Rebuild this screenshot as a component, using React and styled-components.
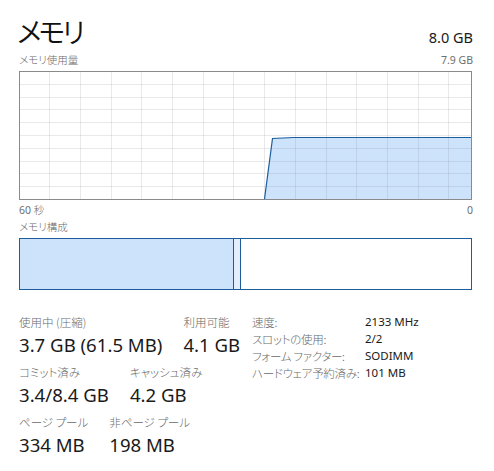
import styled, { createGlobalStyle } from "styled-components";

const GlobalStyle = createGlobalStyle`
  body {
    margin: 0;
    background: #ffffff;
    font-family: "Noto Sans", "Noto Sans CJK JP", sans-serif;
    color: #1a1a1a;
  }
`;

const Page = styled.div`
  width: 494px;
  height: 471px;
  padding: 12px 22px 0 19px;
  box-sizing: border-box;
  overflow: hidden;
`;

const HeadRow = styled.div`
  display: flex;
  justify-content: space-between;
  align-items: baseline;
`;

const Title = styled.div`
  font-family: "Noto Sans CJK JP", sans-serif;
  font-feature-settings: "palt";
  font-size: 28px;
  font-weight: 350;
  letter-spacing: -3px;
  line-height: 38px;
  color: #111;
  margin-left: -2px;
`;

const Total = styled.div`
  font-size: 14.5px;
  margin-right: -1px;
`;

const CaptionRow = styled.div`
  display: flex;
  justify-content: space-between;
  font-size: 10.5px;
  line-height: 14px;
  color: #6d6d6d;
  margin-top: ${(p) => p.$mt || 0}px;
  margin-right: -1px;
`;

const Jp = styled.span`
  font-family: "Noto Sans CJK JP", sans-serif;
  font-feature-settings: "palt";
  font-weight: 300;
  color: #6a6a6a;
  white-space: nowrap;
`;

const Graph = styled.svg`
  display: block;
  margin-top: 4px;
`;

const CompositionBar = styled.div`
  display: flex;
  height: 52px;
  width: 453px;
  margin-top: 4px;
  box-sizing: border-box;
  border: 1px solid #1d5c9b;
`;

const Segment = styled.div`
  width: ${(p) => p.$w}px;
  flex: ${(p) => (p.$w ? "none" : "1")};
  background: ${(p) => p.$bg};
  border-right: ${(p) => (p.$last ? "none" : "1px solid #1d5c9b")};
`;

const Stats = styled.div`
  display: flex;
  margin-top: 24px;
`;

const LeftStats = styled.div`
  width: 233px;
  display: flex;
  flex-direction: column;
  gap: 5px;
`;

const StatRow = styled.div`
  display: flex;
  gap: 21px;
`;

const Stat = styled.div`
  display: flex;
  flex-direction: column;
`;

const StatLabel = styled(Jp)`
  display: block;
  font-size: 11.5px;
  line-height: 16px;
`;

const StatValue = styled.div`
  font-size: 18.6px;
  line-height: 29px;
  color: #1a1a1a;
  white-space: nowrap;
`;

const InfoTable = styled.div`
  display: grid;
  grid-template-columns: 113px auto;
  grid-auto-rows: 17px;
  align-items: center;
  margin-top: -1px;
  font-size: 11.5px;
`;

const InfoKey = styled(Jp)`
  display: block;
  letter-spacing: -0.3px;
`;

const InfoVal = styled.div`
  color: #1a1a1a;
  white-space: nowrap;
`;

const W = 453;
const H = 129;

function UsageGraph() {
  const vLines = [];
  for (let i = 1; i <= 14; i++) vLines.push(Math.round(0.5 + i * 30.7) - 0.5);
  const hLines = [];
  for (let i = 1; i <= 9; i++) hLines.push(Math.round(i * 12.8) + 0.5);
  const pts = "245.5,128 253.5,67.5 274.5,66.5 452,66.5";
  return (
    <Graph width={W} height={H} viewBox={`0 0 ${W} ${H}`}>
      <rect x="0" y="0" width={W} height={H} fill="#fff" />
      <polygon points={`${pts} 452,128`} fill="#cce3fb" />
      {vLines.map((x) => (
        <line key={"v" + x} x1={x} y1="0" x2={x} y2={H} stroke="rgba(120,120,130,0.16)" />
      ))}
      {hLines.map((y) => (
        <line key={"h" + y} x1="0" y1={y} x2={W} y2={y} stroke="rgba(120,120,130,0.16)" />
      ))}
      <polyline points={pts} fill="none" stroke="#1c5d9e" strokeWidth="1.2" />
      <rect x="0.5" y="0.5" width={W - 1} height={H - 1} fill="none" stroke="#8a8a8a" />
    </Graph>
  );
}

const leftStats = [
  [
    ["使用中 (圧縮)", "3.7 GB (61.5 MB)"],
    ["利用可能", "4.1 GB"],
  ],
  [
    ["コミット済み", "3.4/8.4 GB"],
    ["キャッシュ済み", "4.2 GB"],
  ],
  [
    ["ページ プール", "334 MB"],
    ["非ページ プール", "198 MB"],
  ],
];

const info = [
  ["速度:", "2133 MHz"],
  ["スロットの使用:", "2/2"],
  ["フォーム ファクター:", "SODIMM"],
  ["ハードウェア予約済み:", "101 MB"],
];

export default function App() {
  return (
    <Page>
      <GlobalStyle />
      <HeadRow>
        <Title>メモリ</Title>
        <Total>8.0 GB</Total>
      </HeadRow>
      <CaptionRow $mt={3}>
        <Jp>メモリ使用量</Jp>
        <span>7.9 GB</span>
      </CaptionRow>
      <UsageGraph />
      <CaptionRow $mt={3}>
        <span>
          60 <Jp>秒</Jp>
        </span>
        <span>0</span>
      </CaptionRow>
      <CaptionRow $mt={3}>
        <Jp>メモリ構成</Jp>
      </CaptionRow>
      <CompositionBar>
        <Segment $w={213} $bg="#cce3fb" />
        <Segment $w={6} $bg="#e4eefa" />
        <Segment $bg="#ffffff" $last />
      </CompositionBar>
      <Stats>
        <LeftStats>
          {leftStats.map((row, i) => (
            <StatRow key={i}>
              {row.map(([label, value]) => (
                <Stat key={label}>
                  <StatLabel>{label}</StatLabel>
                  <StatValue>{value}</StatValue>
                </Stat>
              ))}
            </StatRow>
          ))}
        </LeftStats>
        <InfoTable>
          {info.map(([k, v]) => [
            <InfoKey key={k}>{k}</InfoKey>,
            <InfoVal key={k + "v"}>{v}</InfoVal>,
          ])}
        </InfoTable>
      </Stats>
    </Page>
  );
}
